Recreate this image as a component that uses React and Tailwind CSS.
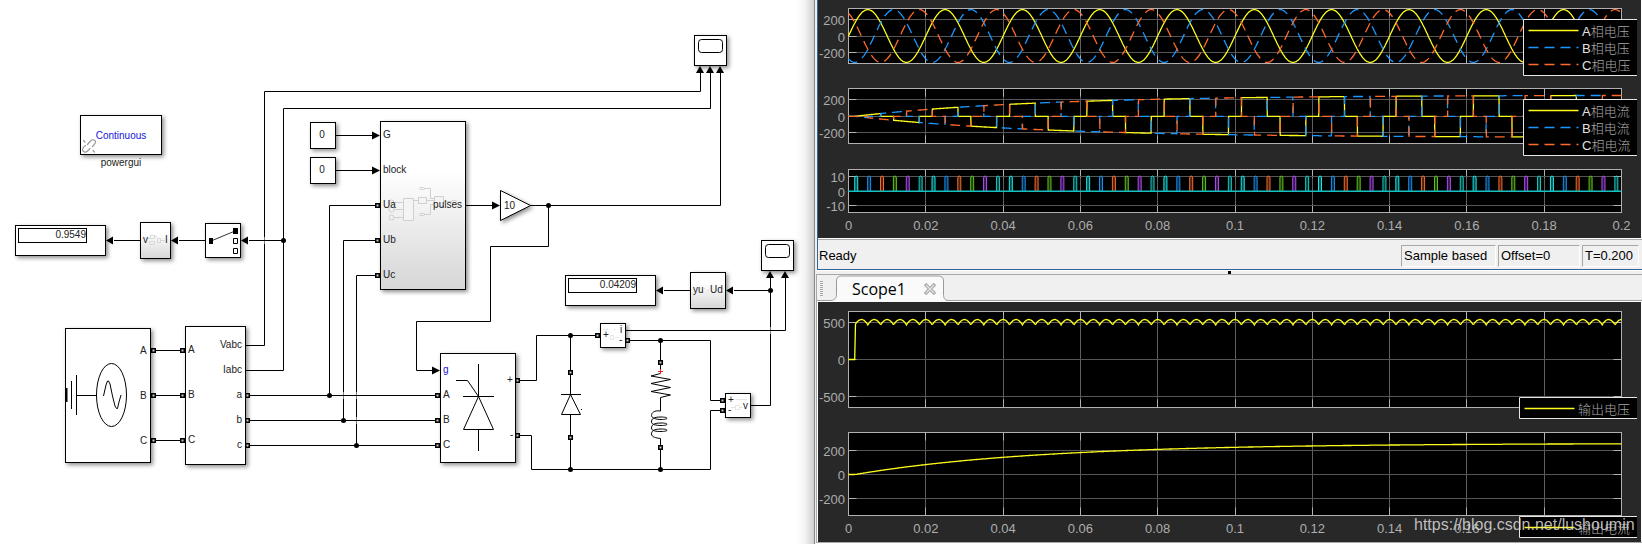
import React from "react";

/* ------------------------------------------------------------------
   Simulink model on the left, its two scopes on the right.
------------------------------------------------------------------ */

const YELLOW = "#ffff1e";
const BLUE = "#1b98ff";
const ORANGE = "#ff6a2a";

// ---------- model blocks ----------

function Box({ x, y, w, h, fill = "#fff" }) {
  return (
    <g className="drop-shadow-[2px_2px_2px_rgba(0,0,0,0.45)]">
      <rect x={x + 0.5} y={y + 0.5} width={w - 1} height={h - 1} fill={fill} stroke="#000" />
    </g>
  );
}

function Label({ x, y, children, anchor = "start", fill = "#222" }) {
  return (
    <text x={x} y={y} textAnchor={anchor} fill={fill} fontSize="10">
      {children}
    </text>
  );
}

const ARROWS = {
  left: "M0 0L7 -4V4Z",
  right: "M0 0L-8 -4V4Z",
  up: "M0 0L-4 7H4Z",
};

function Arrow({ x, y, dir }) {
  return <path d={ARROWS[dir]} transform={`translate(${x} ${y})`} />;
}

function Display({ x, y, value }) {
  return (
    <g>
      <Box x={x} y={y} w={91} h={31} />
      <rect x={x + 3.5} y={y + 3.5} width={68} height={14} fill="#fff" stroke="#000" />
      <Label x={x + 71} y={y + 13} anchor="end">{value}</Label>
    </g>
  );
}

function Scope({ x, y }) {
  return (
    <g>
      <Box x={x} y={y} w={33} h={31} />
      <rect x={x + 4.5} y={y + 4.5} width={24} height={13} rx="3" fill="none" stroke="#000" />
    </g>
  );
}

const PORTS = [
  [153, 350], [153, 395], [153, 440], [182, 350], [182, 395], [182, 440],
  [247, 395], [247, 420], [247, 445], [377, 205], [377, 240], [377, 275],
  [437, 395], [437, 420], [437, 445], [517, 380], [517, 435],
  [597, 335], [627, 340], [722, 400], [722, 410],
  [570, 372], [570, 437], [660, 362], [660, 447],
];

const NODES = [
  [283.5, 240.5], [548.5, 205.5], [329.5, 395.5], [343.5, 420.5], [356.5, 445.5],
  [570.5, 335.5], [570.5, 469.5], [660.5, 340.5], [660.5, 469.5], [770.5, 290.5],
];

const ARROW_HEADS = [
  [106, 240.5, "left"], [171, 240.5, "left"], [241, 240.5, "left"],
  [656, 290.5, "left"], [726, 290.5, "left"],
  [380, 135.5, "right"], [380, 170.5, "right"], [500, 205.5, "right"], [440, 370.5, "right"],
  [700, 66, "up"], [710, 66, "up"], [720, 66, "up"], [770, 271, "up"], [785, 271, "up"],
];

// where a vertical wire passes under a horizontal one
const CROSSINGS = [[264.5, 240.5], [343.5, 395.5], [356.5, 395.5], [356.5, 420.5], [770.5, 330.5]];

const LABELS = [
  [140, 354, "A"], [140, 399, "B"], [140, 444, "C"],
  [188, 353, "A"], [188, 398, "B"], [188, 443, "C"],
  [383, 138, "G"], [383, 173, "block"], [383, 208, "Ua"], [383, 243, "Ub"], [383, 278, "Uc"],
  [443, 398, "A"], [443, 423, "B"], [443, 448, "C"],
  [504, 209, "10"], [507, 383, "+"], [510, 438, "-"],
  [603, 338, "+"], [619, 343, "-"], [620, 333, "i"],
  [728, 403, "+"], [728, 413, "-"], [743, 409, "v"],
  [143, 243, "v"], [165, 243, "I"], [693, 293, "yu"], [710, 293, "Ud"],
];

function Model() {
  return (
    <svg viewBox="0 0 814 544" className="block h-auto w-full font-['Liberation_Sans',Arial,sans-serif]">
      <defs>
        <linearGradient id="shade" x1="0" y1="0" x2="0" y2="1">
          <stop offset="0.3" stopColor="#fff" />
          <stop offset="1" stopColor="#d6d6d6" />
        </linearGradient>
        <linearGradient id="edge" x1="0" y1="0" x2="1" y2="0">
          <stop offset="0" stopColor="#fff" />
          <stop offset="0.5" stopColor="#f3f3f3" />
          <stop offset="1" stopColor="#cfcfcf" />
        </linearGradient>
      </defs>
      <rect x="796" width="18" height="544" fill="url(#edge)" />

      {/* wires */}
      <g fill="none" stroke="#000">
        <path d="M246 345.5H264.5V91.5H700.5V73M246 370.5H283.5V108.5H710.5V73" />
        <path d="M376 205.5H329.5V395.5M376 240.5H343.5V420.5M376 275.5H356.5V445.5" />
        <path d="M751 405.5H770.5V278" />
      </g>
      {CROSSINGS.map(([x, y]) => (
        <rect key={`${x}-${y}`} x={x - 1.5} y={y - 3.5} width="3" height="7" fill="#fff" opacity="0.5" />
      ))}
      <g fill="none" stroke="#000">
        <path d="M114 240.5H140M179 240.5H205M249 240.5H283.5" />
        <path d="M155 350.5H180M155 395.5H180M155 440.5H180" />
        <path d="M250 395.5H435M250 420.5H435M250 445.5H435" />
        <path d="M336 135.5H372M336 170.5H372M466 205.5H492M530 205.5H720.5V73" />
        <path d="M548.5 205.5V246.5H490.5V321.5H416.5V370.5H432" />
        <path d="M520 380.5H536.5V335.5H596M520 435.5H531.5V469.5H710.5V410.5H721" />
        <path d="M626 330.5H785.5V278M630 340.5H710.5V400.5H721" />
        <path d="M664 290.5H690M734 290.5H770.5" />
      </g>

      {/* powergui */}
      <Box x={80} y={115} w={82} h={40} />
      <g fill="none" stroke="#999" strokeWidth="1.2" strokeLinecap="round">
        <path d="M87.5 144.5L90.5 141C92.5 139 95.5 139.5 95.5 142C95.5 143.5 94 145 92.5 146.5" />
        <path d="M90 148.5L87.5 151C85.5 153 82.5 152 82.5 149.5C82.5 148 84 146.5 85.5 145.5" />
        <path d="M83.5 140.5L85 142M93 150.5L94.5 152" />
      </g>
      <Label x={121} y={139} anchor="middle" fill="#1616d8">Continuous</Label>
      <Label x={121} y={166} anchor="middle">powergui</Label>

      <Display x={15} y={225} value="0.9549" />
      <Display x={565} y={275} value="0.04209" />
      <Scope x={694} y={35} />
      <Scope x={761} y={240} />

      {/* v -> I and yu -> Ud subsystems */}
      <Box x={140} y={222} w={31} h={37} fill="url(#shade)" />
      <Box x={690} y={272} w={36} h={37} fill="url(#shade)" />
      <g fill="none" stroke="#d8d8d8">
        <path d="M150.5 235.5H154.5V238.5H150.5ZM149.5 241.5H154.5V244.5H149.5ZM157.5 238.5H160.5V242.5H157.5ZM155 236.5H157M146 238.5H150M160 240.5H165" />
        <path d="M704 288.5H705M707 290.5H709" />
      </g>

      {/* signal selector */}
      <Box x={205} y={223} w={36} h={35} />
      <path d="M211 241L235 231" stroke="#333" />
      <path d="M209 238H213V244H209ZM233 228H238V234H233Z" />
      <path d="M233.5 238.5H237.5V243.5H233.5ZM233.5 248.5H237.5V253.5H233.5Z" fill="#fff" stroke="#000" />

      {/* three-phase source */}
      <Box x={65} y={328} w={86} h={135} />
      <g fill="none" stroke="#000">
        <ellipse cx="111.5" cy="395" rx="15" ry="31.5" />
        <path d="M76.5 375V415M71.5 381V409M76 395.5H97" />
        <path d="M66.5 388V402" strokeWidth="2" />
        <path d="M103.5 396L106 385L107.5 381H108.5L110 384L112.5 396L115 406L116.5 408.5H117.5L119 402L121 395" />
      </g>

      {/* V-I measurement */}
      <Box x={185} y={326} w={61} h={139} />
      <Label x={242} y={348} anchor="end">Vabc</Label>
      <Label x={242} y={373} anchor="end">Iabc</Label>
      <Label x={242} y={398} anchor="end">a</Label>
      <Label x={242} y={423} anchor="end">b</Label>
      <Label x={242} y={448} anchor="end">c</Label>

      {/* constants */}
      <Box x={310} y={122} w={26} h={27} />
      <Box x={310} y={157} w={26} h={27} />
      <Label x={322} y={138} anchor="middle">0</Label>
      <Label x={322} y={173} anchor="middle">0</Label>

      {/* pulse generator subsystem */}
      <Box x={380} y={121} w={86} h={169} fill="url(#shade)" />
      <g fill="none" stroke="#cfcfcf">
        <path d="M403.5 198.5H413.5V220.5H403.5ZM418.5 197.5H426.5V203.5H418.5ZM434.5 196.5H443.5V206.5H434.5Z" fill="#f4f4f4" />
        <path d="M394 202.5H403M394 209.5H403M394 217.5H403M414 200.5H418M427 200.5H434M444 201.5H452" />
        <path d="M424 188.5H430.5V198.5H434M424 214.5H430.5V204.5H434" />
        <rect x="419.5" y="187.5" width="5" height="2" rx="1" />
        <rect x="419.5" y="213.5" width="5" height="2" rx="1" />
        <rect x="451.5" y="200.5" width="5" height="2" rx="1" />
        <circle cx="391.5" cy="202.5" r="2.5" />
        <circle cx="391.5" cy="209.5" r="2.5" />
        <circle cx="391.5" cy="217.5" r="2.5" />
      </g>
      <Label x={462} y={208} anchor="end">pulses</Label>

      {/* gain */}
      <path
        className="drop-shadow-[2px_2px_2px_rgba(0,0,0,0.45)]"
        d="M500.5 190.5V220.5L530.5 205.5Z"
        fill="#fff"
        stroke="#000"
      />

      {/* thyristor bridge */}
      <Box x={440} y={353} w={76} h={110} />
      <g fill="none" stroke="#000">
        <path d="M478.5 364V396.5M478.5 429.5V451M463 396.5H494M456 380.5H467.5L478.5 396.5" />
        <path d="M478.5 396.5L463.5 429.5H493.5Z" />
      </g>
      <Label x={443} y={373} fill="#1616d8">g</Label>

      {/* free-wheeling diode */}
      <g fill="none" stroke="#000">
        <path d="M570.5 335V370M570.5 375V394M570.5 415V435M570.5 440V469" />
        <path d="M561 394.5H581M570.5 394.5L561.5 414.5H580.5Z" />
      </g>
      <rect x="581" y="409" width="1" height="1" />

      {/* R-L load */}
      <g fill="none" stroke="#000">
        <path d="M660.5 340V360M660.5 365V373.5L651 376L670.5 379.5L651 383.5L670.5 387.5L651 391.5L670.5 395L660.5 397.5V411" />
        <path d="M660.5 411C654 410 651.5 413 651.5 415.5C651.5 418 656 419.5 661 419.5C669 419.5 669 417 661 417C653 417 651.5 419 651.5 422C651.5 424.5 656 425.5 661 425.5C669 425.5 669 423 661 423C653 423 651.5 425.5 651.5 428C651.5 431 656 431.5 661 431.5C669 431.5 669 429 661 429C653 429 651.5 431.5 651.5 434C651.5 437 656 438 660.5 438.5V445M660.5 450V469" />
      </g>
      <path d="M658 371.5H663M660.5 369V374" stroke="#e22" />

      {/* current and voltage measurement */}
      <Box x={600} y={323} w={26} h={25} />
      <Box x={725} y={393} w={26} h={25} />
      <g fill="none" stroke="#e6e6e6">
        <path d="M603 329.5H608M614 329.5H615M610.5 335.5H613.5V339.5H610.5ZM615 337.5H619" />
        <path d="M735 399.5H747M731 407.5H735M735.5 405.5H739.5V409.5H735.5ZM740 407.5H743" />
      </g>

      {LABELS.map(([x, y, s]) => (
        <Label key={`${x}-${y}`} x={x} y={y}>{s}</Label>
      ))}
      {PORTS.map(([x, y]) => (
        <rect key={`${x}-${y}`} x={x - 1.25} y={y - 1.25} width="3.5" height="3.5" fill="#ccc" stroke="#000" strokeWidth="1.5" />
      ))}
      {NODES.map(([x, y]) => (
        <circle key={`${x}-${y}`} cx={x} cy={y} r="2.5" />
      ))}
      {ARROW_HEADS.map(([x, y, dir]) => (
        <Arrow key={`${x}-${y}`} x={x} y={y} dir={dir} />
      ))}
    </svg>
  );
}

// ---------- scope signals ----------

const X0 = 30.5;
const X1 = 803.5;
const T_END = 0.2;
const PERIOD = 0.02;
const T_ON = 0.00167;

const px = (t) => X0 + (t / T_END) * (X1 - X0);

function trace(fn, mid, perUnit, step = 0.0002) {
  const pts = [];
  for (let i = 0; i <= Math.round(T_END / step); i++) {
    const t = i * step;
    pts.push(`${px(t).toFixed(1)},${(mid - fn(t) * perUnit).toFixed(1)}`);
  }
  return pts.join(" ");
}

const phase = (lag) => (t) => 320 * Math.sin((2 * Math.PI * t) / PERIOD - lag);

const load = (t) => (t < T_ON ? 0 : 260 * (1 - Math.exp(-(t - T_ON) / 0.048)));

// line current: 120 degree blocks of the load current
const lineCurrent = (shift) => (t) => {
  const u = (((t - shift) % PERIOD) + PERIOD) % PERIOD;
  if (u >= 0.00167 && u < 0.00833) return load(t);
  if (u >= 0.01167 && u < 0.01833) return -load(t);
  return 0;
};

const rectified = (t) => {
  if (t < T_ON) return 0;
  const s = PERIOD / 6;
  return 540 * Math.cos((2 * Math.PI * (t - Math.round(t / s) * s)) / PERIOD);
};

const PULSE_COLORS = ["#16eaea", "#1890f0", "#f86a2c", "#60c41a", "#b04cf4", "#14ccc4"];
const PULSES = Array.from({ length: 60 }, (_, i) => ({
  x: px(0.002 + (i * PERIOD) / 6),
  color: PULSE_COLORS[i % 6],
}));

const TIMES = ["0", "0.02", "0.04", "0.06", "0.08", "0.1", "0.12", "0.14", "0.16", "0.18", "0.2"];

// ---------- scope drawing ----------

function Plot({ top, bottom, rows, children }) {
  return (
    <g>
      <rect x={X0} y={top} width={X1 - X0} height={bottom - top} fill="#000" />
      {TIMES.slice(1, -1).map((t) => {
        const x = Math.floor(px(Number(t))) + 0.5;
        return (
          <g key={t}>
            <path d={`M${x} ${top}V${bottom}`} stroke="#5e5e5e" />
            <path d={`M${x} ${top}v8M${x} ${bottom}v-8`} stroke="#b0b0b0" />
          </g>
        );
      })}
      {rows.map(([y, label]) => (
        <g key={label}>
          <path d={`M${X0} ${y}H${X1}`} stroke="#565656" />
          <path d={`M${X0} ${y}h8M${X1} ${y}h-8`} stroke="#b0b0b0" />
          <text x="27" y={y + 5.5} textAnchor="end" fill="#adadad" fontSize="13">{label}</text>
        </g>
      ))}
      <rect x={X0} y={top} width={X1 - X0} height={bottom - top} fill="none" stroke="#b0b0b0" />
      {children}
    </g>
  );
}

function TimeAxis({ y }) {
  return TIMES.map((t) => (
    <text key={t} x={px(Number(t))} y={y} textAnchor="middle" fill="#adadad" fontSize="13">{t}</text>
  ));
}

function Legend({ x, y, h, rows }) {
  return (
    <g>
      <rect x={x} y={y} width={819 - x} height={h} fill="#000" />
      <path d={`M819 ${y}H${x}V${y + h}H819`} fill="none" stroke="#e6e6e6" />
      {rows.map(([lead, name, color, dash], i) => (
        <g key={lead + name}>
          <path d={`M${x + 5} ${y + 11 + i * 17}h50`} stroke={color} strokeWidth="1.4" strokeDasharray={dash} />
          <text x={x + 58.5} y={y + 16.5 + i * 17} fontSize="13" fill="#a6a6a6" className="font-light">
            <tspan fill="#e0e0e0">{lead}</tspan>{name}
          </text>
        </g>
      ))}
    </g>
  );
}

const DASH = "10 6";
const SCOPE_SVG = "block h-auto w-full bg-[#282828] font-['Liberation_Sans','Noto_Sans_CJK_SC',sans-serif]";

function ThreePhaseScope() {
  const shift = PERIOD / 3;
  const lag = (2 * Math.PI) / 3;
  return (
    <svg viewBox="0 0 823 238" className={SCOPE_SVG}>
      <Plot top={8.5} bottom={63.5} rows={[[19.5, "200"], [36.5, "0"], [52.5, "-200"]]}>
        <g fill="none" strokeWidth="1.3">
          <polyline points={trace(phase(0), 36, 0.0825)} stroke={YELLOW} />
          <polyline points={trace(phase(lag), 36, 0.0825)} stroke={BLUE} strokeDasharray={DASH} />
          <polyline points={trace(phase(-lag), 36, 0.0825)} stroke={ORANGE} strokeDasharray={DASH} />
        </g>
      </Plot>
      <Plot top={88.5} bottom={143.5} rows={[[99.5, "200"], [116.5, "0"], [132.5, "-200"]]}>
        <g fill="none" strokeWidth="1.3">
          <polyline points={trace(lineCurrent(0), 116.3, 0.0815, 0.00005)} stroke={YELLOW} />
          <polyline points={trace(lineCurrent(shift), 116.3, 0.0815, 0.00005)} stroke={BLUE} strokeDasharray={DASH} />
          <polyline points={trace(lineCurrent(-shift), 116.3, 0.0815, 0.00005)} stroke={ORANGE} strokeDasharray={DASH} />
        </g>
      </Plot>
      <Plot top={169.5} bottom={212.5} rows={[[176.5, "10"], [191.5, "0"], [205.5, "-10"]]}>
        {PULSES.map((p) => (
          <path
            key={p.x}
            d={`M${p.x - 1.5} 191V178q0 -2 1.5 -2t1.5 2V191`}
            fill={p.color}
            fillOpacity="0.3"
            stroke={p.color}
          />
        ))}
        <path d={`M${X0} 191.2H${X1}`} stroke="#16c0c0" strokeWidth="1.5" />
      </Plot>
      <TimeAxis y={230} />
      <Legend
        x={705.5}
        y={19.5}
        h={56}
        rows={[["A", "相电压", YELLOW], ["B", "相电压", BLUE, DASH], ["C", "相电压", ORANGE, DASH]]}
      />
      <Legend
        x={705.5}
        y={99.5}
        h={56}
        rows={[["A", "相电流", YELLOW], ["B", "相电流", BLUE, DASH], ["C", "相电流", ORANGE, DASH]]}
      />
    </svg>
  );
}

function OutputScope() {
  return (
    <svg viewBox="0 0 823 240" className={SCOPE_SVG}>
      <Plot top={9.5} bottom={105.5} rows={[[20.5, "500"], [57.5, "0"], [94.5, "-500"]]}>
        <polyline points={trace(rectified, 57.5, 0.074)} fill="none" stroke={YELLOW} strokeWidth="1.3" />
      </Plot>
      <Plot top={130.5} bottom={213.5} rows={[[148.5, "200"], [172.5, "0"], [196.5, "-200"]]}>
        <polyline points={trace(load, 172.5, 0.12)} fill="none" stroke={YELLOW} strokeWidth="1.3" />
      </Plot>
      <TimeAxis y={231} />
      <Legend x={701.5} y={95.5} h={21} rows={[["", "输出电压", YELLOW]]} />
      <Legend x={701.5} y={214.5} h={21} rows={[["", "输出电流", YELLOW]]} />
      <text x="596" y="228" fontSize="16" fill="#dcdcdc" fillOpacity="0.85">
        https://blog.csdn.net/lushoumin
      </text>
    </svg>
  );
}

// ---------- windows ----------

const FIELD = "h-[22px] border border-t-[#a8a8a8] border-l-[#a8a8a8] border-r-white border-b-white px-[2px] leading-[19px]";

function StatusBar() {
  return (
    <div className="flex h-[31px] items-center border-t border-white bg-[#f0f0f0] pt-[3px] text-[13px] text-black shadow-[inset_0_1px_0_#a8a8a8]">
      <span className="flex-1 pl-px">Ready</span>
      <div className="flex gap-[2px] pr-[3px]">
        <span className={`w-[95px] ${FIELD}`}>Sample based</span>
        <span className={`w-[82px] ${FIELD}`}>Offset=0</span>
        <span className={`w-[57px] ${FIELD}`}>T=0.200</span>
      </div>
    </div>
  );
}

function TabStrip() {
  return (
    <div className="flex h-[28px] items-stretch border-t border-[#a8a8a8] bg-[#f0f0f0] shadow-[inset_0_-1px_0_#fff,inset_0_-2px_0_#a0a0a0]">
      <div className="flex flex-col justify-center gap-px pr-[8px] pl-[3px]">
        {[0, 1, 2, 3, 4, 5, 6, 7].map((i) => (
          <span key={i} className="h-px w-[3px] bg-[#a8a8a8]" />
        ))}
      </div>
      <div className="relative flex h-[27px] w-[117px] items-center pl-[21px]">
        <svg viewBox="0 0 117 27" className="absolute inset-0 h-full w-full">
          <path d="M0 25.5C4 25 5.5 23 5.5 19V6Q5.5 1 10.5 1H107.5Q112.5 1 112.5 6V19C112.5 23 113.5 25 117 25.5V27H0Z" fill="#fafafa" />
          <path d="M0 25.5C4 25 5.5 23 5.5 19V6Q5.5 1 10.5 1H107.5Q112.5 1 112.5 6V19C112.5 23 113.5 25 117 25.5" fill="none" stroke="#9a9a9a" />
        </svg>
        <button className="relative flex-1 text-left font-['Open_Sans',sans-serif] text-[16px] leading-[20px] text-black">
          Scope1
        </button>
        <button aria-label="Close" className="relative mr-[12px]">
          <svg viewBox="0 0 12 12" className="block h-[12px] w-[12px]">
            <path d="M1 1L11 11M11 1L1 11" stroke="#ababab" strokeWidth="3.5" />
            <path d="M2 2L10 10M10 2L2 10" stroke="#e2e2e2" strokeWidth="1.2" />
          </svg>
        </button>
      </div>
    </div>
  );
}

export default function App() {
  return (
    <div className="grid grid-cols-[814fr_828fr] bg-white font-['Liberation_Sans',Arial,sans-serif]">
      <Model />
      <div className="flex flex-col border-l border-[#858585] bg-[#f0f0f0] pl-px">
        <section className="ml-px border-b border-l border-[#2f659c]">
          <div className="border-r border-white">
            <ThreePhaseScope />
          </div>
          <StatusBar />
        </section>
        <div className="flex h-[4px] items-end justify-center border-t border-white">
          <span className="h-[3px] w-[3px] bg-black" />
        </div>
        <section className="border-b border-l border-[#a8a8a8]">
          <TabStrip />
          <div className="border-r border-l border-white">
            <OutputScope />
          </div>
        </section>
        <div className="flex-1 bg-white" />
      </div>
    </div>
  );
}
